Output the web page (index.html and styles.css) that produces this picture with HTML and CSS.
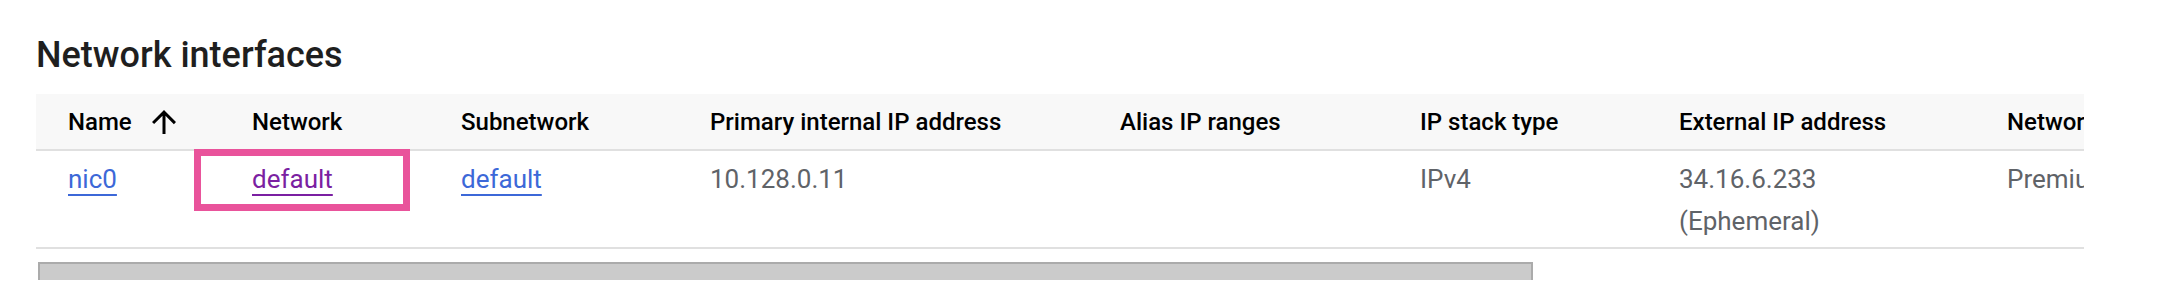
FILE: index.html
```html
<!DOCTYPE html>
<html lang="en">
<head>
    <meta charset="UTF-8">
    <meta name="viewport" content="width=device-width, initial-scale=1.0">
    <title>Network interfaces</title>
    <link rel="stylesheet" href="styles.css">
</head>

<body>
    <section class="panel">
        <h2 class="panel-title">Network interfaces</h2>

        <div class="table-wrap">
            <table class="nic-table">
                <colgroup>
                    <col class="col-name">
                    <col class="col-network">
                    <col class="col-subnet">
                    <col class="col-primary">
                    <col class="col-alias">
                    <col class="col-stack">
                    <col class="col-external">
                    <col class="col-tier">
                </colgroup>
                <thead>
                    <tr>
                        <th>
                            <span class="sort-head">
                                Name
                                <svg class="sort-icon" viewBox="0 0 24 24" aria-hidden="true">
                                    <path d="M4 12l1.41 1.41L11 7.83V20h2V7.83l5.58 5.59L20 12l-8-8-8 8z"/>
                                </svg>
                            </span>
                        </th>
                        <th>Network</th>
                        <th>Subnetwork</th>
                        <th>Primary internal IP address</th>
                        <th>Alias IP ranges</th>
                        <th>IP stack type</th>
                        <th>External IP address</th>
                        <th>Network Tier</th>
                    </tr>
                </thead>
                <tbody>
                    <tr>
                        <td><a href="#" class="link">nic0</a></td>
                        <td class="marked">
                            <a href="#" class="link link-visited">default</a>
                            <span class="highlight"></span>
                        </td>
                        <td><a href="#" class="link">default</a></td>
                        <td>10.128.0.11</td>
                        <td></td>
                        <td>IPv4</td>
                        <td>34.16.6.233<br>(Ephemeral)</td>
                        <td>Premium</td>
                    </tr>
                </tbody>
            </table>
        </div>

        <div class="h-scroll">
            <div class="h-scroll-thumb"></div>
        </div>
    </section>
</body>
</html>
```

FILE: styles.css
```css
:root {
    --color-heading: #1f1f1f;
    --color-text: #5f6368;
    --color-head-bg: #f8f8f8;
    --color-border: #e0e0e0;
    --color-link: #3c68d8;
    --color-visited: #7b1fa2;
    --color-mark: #e9539b;
    --color-thumb: #cbcbcb;
    --color-thumb-edge: #ababab;
}

* {
    margin: 0;
    padding: 0;
    box-sizing: border-box;
}

body {
    background-color: #ffffff;
    font-family: Roboto, "Liberation Sans", sans-serif;
    overflow: hidden;
}

.panel {
    padding: 35px 0 0 36px;
}

.panel-title {
    font-size: 36px;
    line-height: 40px;
    font-weight: 500;
    color: var(--color-heading);
    margin-bottom: 19px;
}

.table-wrap {
    width: 2048px;
    overflow: hidden;
}

.nic-table {
    table-layout: fixed;
    width: 2400px;
    border-collapse: collapse;
}

.col-name { width: 184px; }
.col-network { width: 209px; }
.col-subnet { width: 249px; }
.col-primary { width: 410px; }
.col-alias { width: 300px; }
.col-stack { width: 259px; }
.col-external { width: 328px; }
.col-tier { width: 461px; }

th {
    height: 56px;
    padding: 0 16px 0 32px;
    text-align: left;
    vertical-align: middle;
    font-size: 24px;
    font-weight: 500;
    color: #000000;
    white-space: nowrap;
    background-color: var(--color-head-bg);
    border-bottom: 2px solid var(--color-border);
}

.sort-head {
    display: inline-flex;
    align-items: center;
}

.sort-icon {
    width: 36px;
    height: 36px;
    margin-left: 14px;
    fill: #000000;
}

td {
    padding: 7px 16px 5px 32px;
    vertical-align: top;
    font-size: 26px;
    line-height: 42px;
    color: var(--color-text);
    border-bottom: 2px solid var(--color-border);
}

.link {
    color: var(--color-link);
    text-decoration: underline;
    text-decoration-thickness: 2px;
    text-underline-offset: 6px;
}

.link-visited {
    color: var(--color-visited);
}

.marked {
    position: relative;
}

/* annotation box drawn over the network cell */
.highlight {
    position: absolute;
    left: -26px;
    top: -2px;
    width: 216px;
    height: 62px;
    border: 7px solid var(--color-mark);
    pointer-events: none;
}

.h-scroll {
    width: 2048px;
    margin-top: 13px;
    padding-left: 2px;
}

.h-scroll-thumb {
    width: 1495px;
    height: 18px;
    background-color: var(--color-thumb);
    border-top: 2px solid var(--color-thumb-edge);
    border-left: 2px solid var(--color-thumb-edge);
    border-right: 2px solid var(--color-thumb-edge);
}
```
